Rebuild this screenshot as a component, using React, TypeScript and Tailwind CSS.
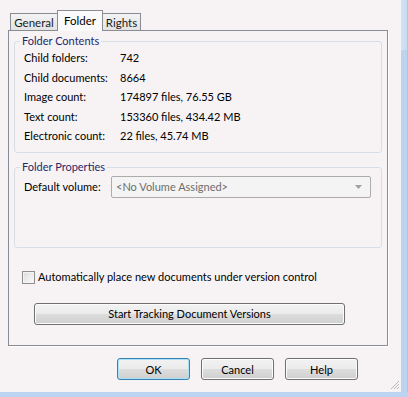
import { ReactNode } from "react";

const rows = [
  { label: "Child folders:", value: "742" },
  { label: "Child documents:", value: "8664" },
  { label: "Image count:", value: "174897 files, 76.55 GB" },
  { label: "Text count:", value: "153360 files, 434.42 MB" },
  { label: "Electronic count:", value: "22 files, 45.74 MB" },
];

function Group({ title, className, children }: { title: string; className?: string; children: ReactNode }) {
  return (
    <fieldset className={`border border-[#d5dfe5] rounded-[3px] mx-[5px] pl-[9px] pr-[8px] ${className ?? ""}`}>
      <legend className="-ml-[4px] px-[2px] text-[#1e2a6b] leading-[14px]">{title}</legend>
      {children}
    </fieldset>
  );
}

function Button({ children, className, focused }: { children: ReactNode; className?: string; focused?: boolean }) {
  return (
    <button
      className={`h-[22px] rounded-[3px] border text-black leading-none bg-[linear-gradient(#f2f2f2_0%,#ebebeb_50%,#dddddd_51%,#cfcfcf_100%)] ${
        focused ? "border-[#3c7fb1] shadow-[inset_0_0_0_1px_#a8e3f8]" : "border-[#707070] shadow-[inset_0_0_0_1px_#fcfcfc]"
      } ${className ?? ""}`}
    >
      {children}
    </button>
  );
}

export default function App() {
  return (
    <div
      className="w-[408px] h-[397px] flex flex-col bg-[#f7f3f5] overflow-hidden text-[11px] text-black whitespace-nowrap"
      style={{ fontFamily: "Lato, 'Noto Sans', sans-serif" }}
    >
      <div className="flex flex-1 min-h-0">
        <div className="flex-1 flex flex-col pl-[8px] pt-[10px]">
          {/* TABS */}
          <div className="flex items-end h-[20px] pl-[2px] relative z-10 text-[11.5px]">
            <div className="h-[17px] w-[48px] border border-b-0 border-[#898c95] bg-[linear-gradient(#f3f3f3,#e3e3e3)] flex items-center justify-center text-[#1a1a1a] leading-none pt-[2px]">
              General
            </div>
            <div className="h-[21px] -mb-[1px] w-[46px] -ml-px border border-b-0 border-[#898c95] bg-[#fbfafb] flex items-start pt-[4px] justify-center leading-none">
              Folder
            </div>
            <div className="h-[17px] w-[39px] -ml-px border border-b-0 border-[#898c95] bg-[linear-gradient(#f3f3f3,#e3e3e3)] flex items-center justify-center text-[#1a1a1a] leading-none pt-[2px]">
              Rights
            </div>
          </div>

          {/* PANEL */}
          <div className="w-[380px] h-[317px] border border-[#898c95] shadow-[1px_1px_0_#ffffff] pt-[3px] flex flex-col">
            <Group title="Folder Contents" className="h-[119px]">
              <div className="grid grid-cols-[96px_1fr] gap-y-[3px] leading-[16.5px] pt-[2px]">
                {rows.map((r) => (
                  <div key={r.label} className="contents">
                    <span>{r.label}</span>
                    <span>{r.value}</span>
                  </div>
                ))}
              </div>
            </Group>

            <Group title="Folder Properties" className="h-[88px] mt-[7px]">
              <div className="flex items-center pt-[2px]">
                <span className="w-[87px]">Default volume:</span>
                <div className="w-[260px] h-[22px] border border-[#acacac] rounded-[2px] bg-[#f4f4f4] flex items-center justify-between pl-[4px] pr-[7px] text-[#6d6d6d]">
                  <span>&lt;No Volume Assigned&gt;</span>
                  <svg width="8" height="4" viewBox="0 0 8 4">
                    <path d="M0 0h7L3.5 4z" fill="#a0a0a0" />
                  </svg>
                </div>
              </div>
            </Group>

            <label className="flex items-center gap-[3px] ml-[13px] mt-[21px]">
              <span className="w-[13px] h-[13px] border border-[#8f8f8f] bg-[linear-gradient(135deg,#dcdcdc,#fbfbfb)] shadow-[inset_0_0_0_1px_#f4f4f4]" />
              <span>Automatically place new documents under version control</span>
            </label>

            <Button className="w-[311px] ml-[25px] mt-[17px]">Start Tracking Document Versions</Button>
          </div>

          {/* DIALOG BUTTONS */}
          <div className="flex pl-[109px] gap-[11px] mt-[12px]">
            <Button focused className="w-[73px]">OK</Button>
            <Button className="w-[73px]">Cancel</Button>
            <Button className="w-[73px]">Help</Button>
          </div>

          <div className="flex-1 flex justify-end items-end pr-[1px] pb-[2px]">
            <svg width="10" height="10" viewBox="0 0 10 10">
              <path d="M9 1L1 9M9 4L4 9M9 7L7 9" stroke="#b8b8b8" strokeWidth="1" />
            </svg>
          </div>
        </div>
        <div className="w-[7px] flex flex-col">
          <div className="h-[50px] bg-[linear-gradient(90deg,#d3e3f6,#c6daf2_85%,#5fd0f0)]" />
          <div className="flex-1 bg-[linear-gradient(90deg,#bcd4ef,#bcd4ef_85%,#5fd0f0)]" />
        </div>
      </div>
      <div className="h-[5px] bg-[#bcd4ef]" />
    </div>
  );
}
